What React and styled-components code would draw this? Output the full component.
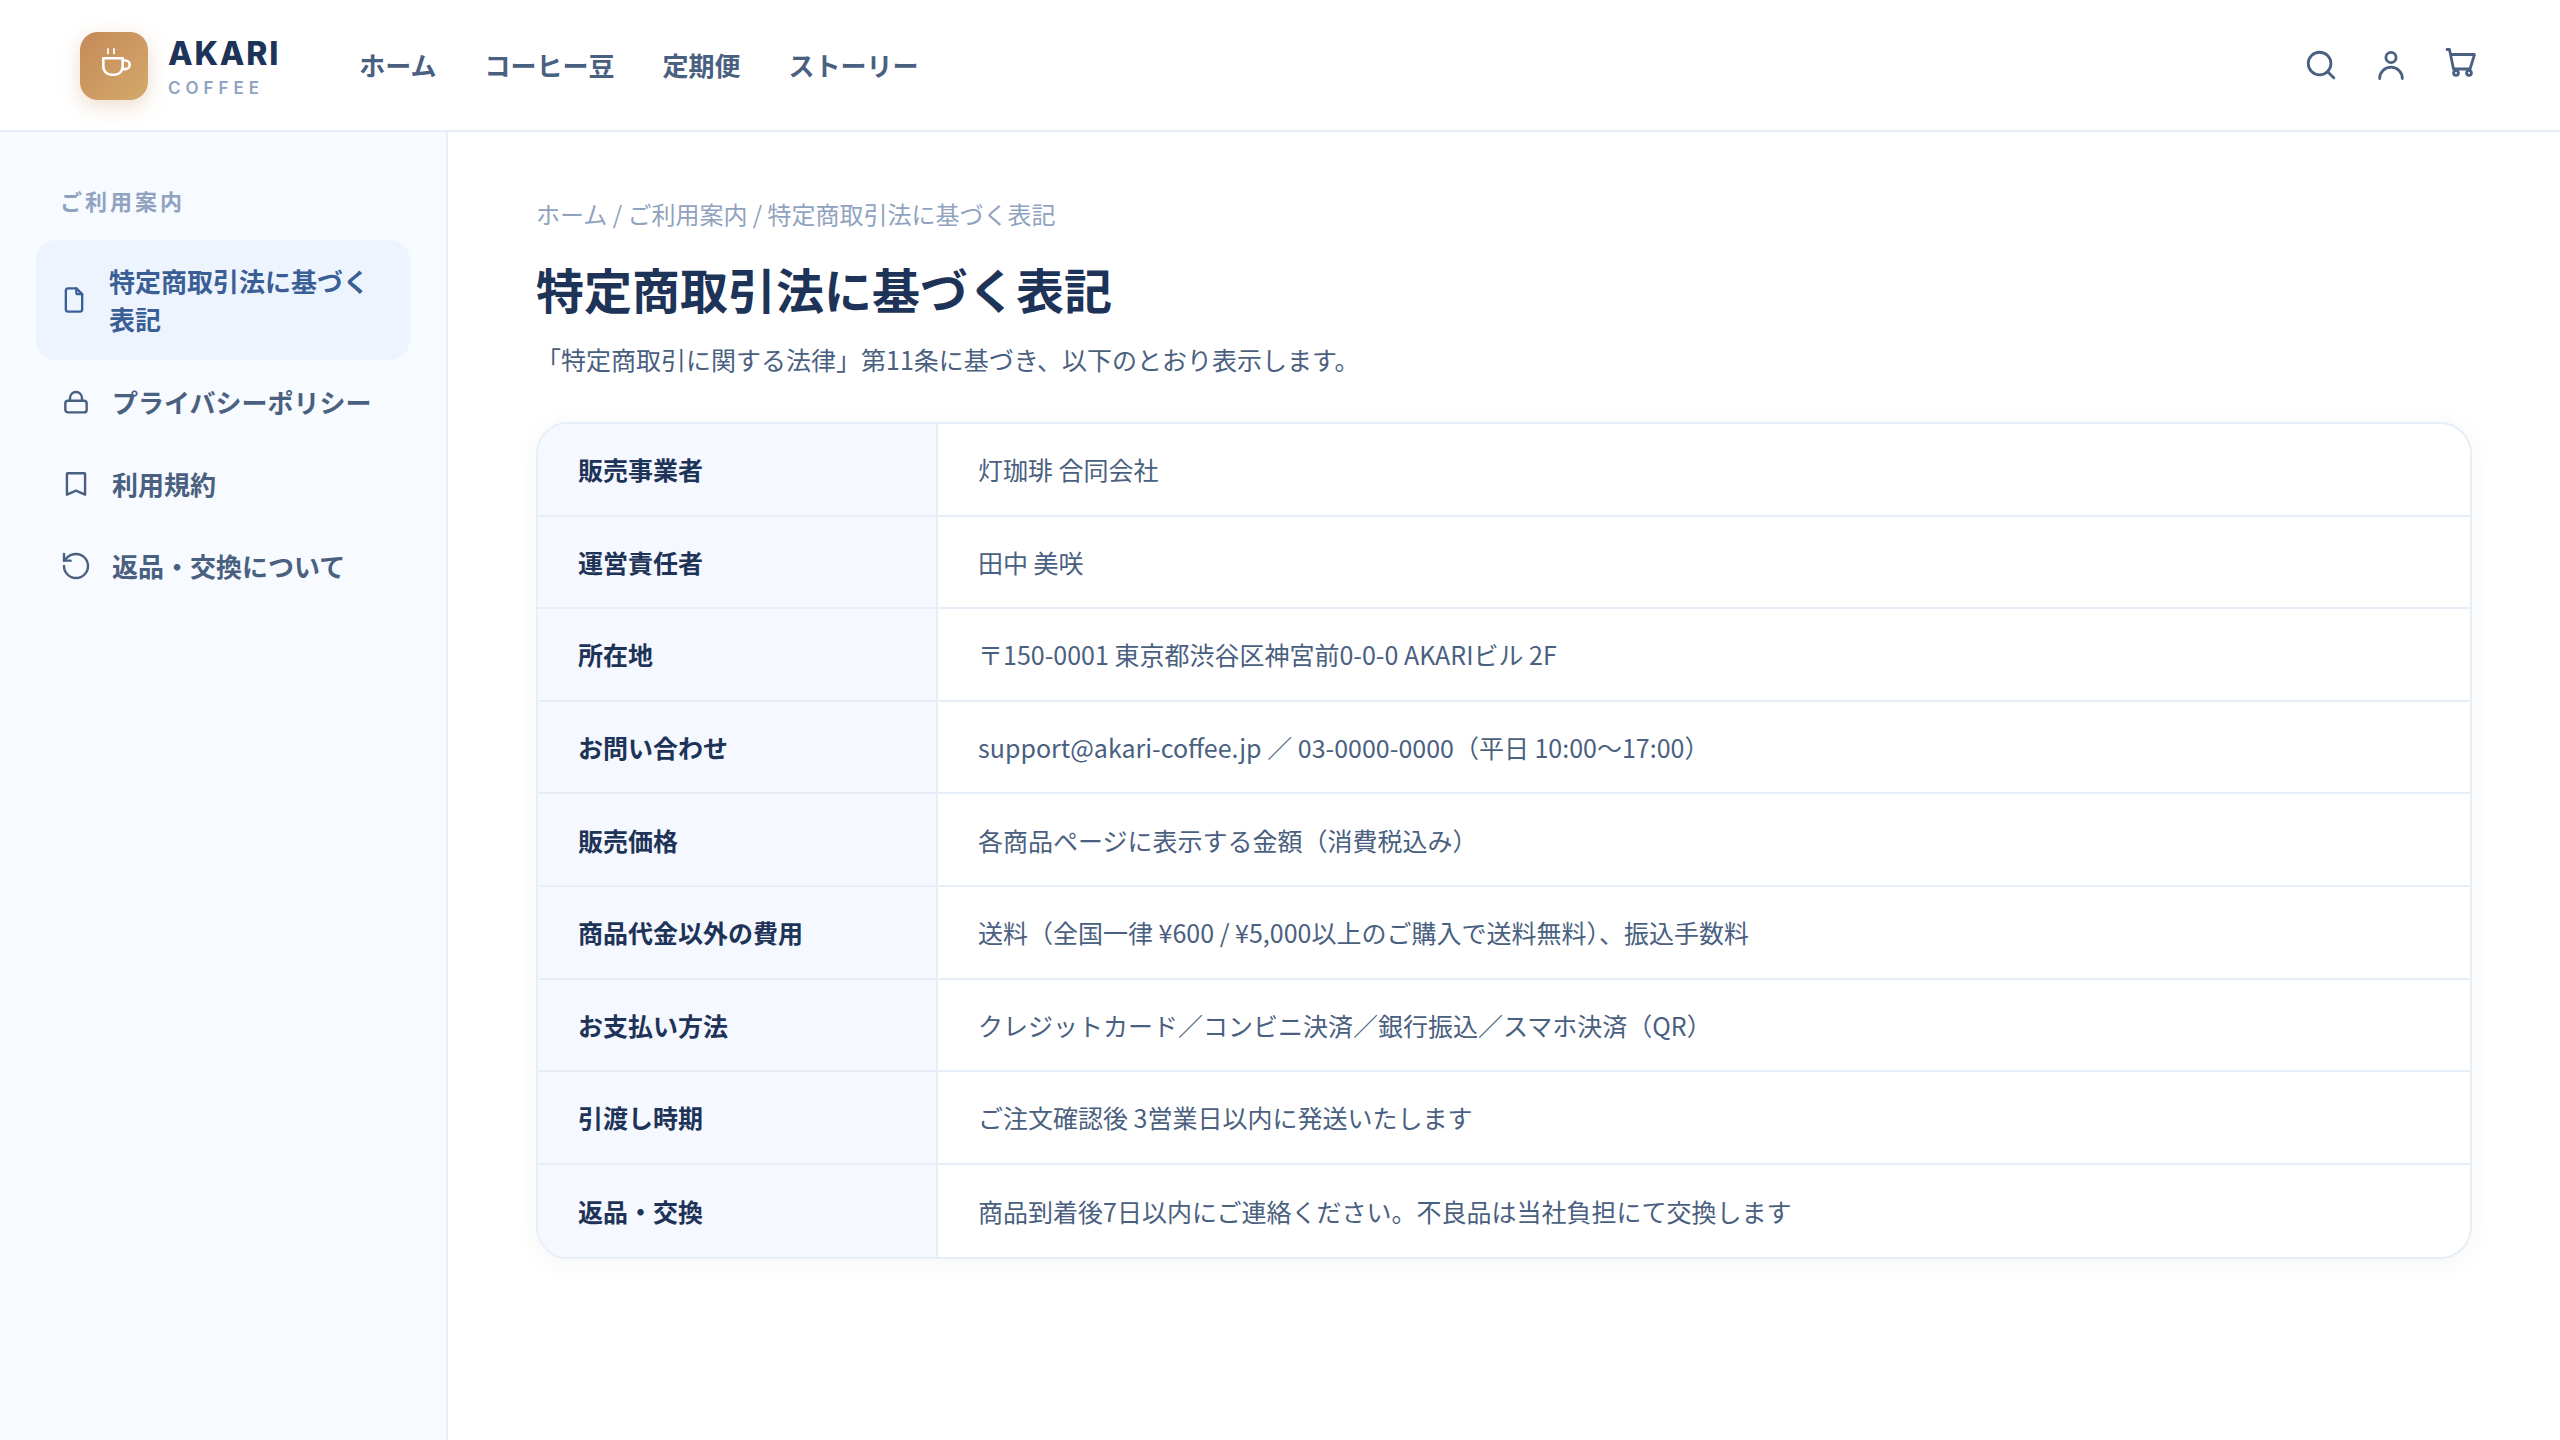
import React from 'react';
import styled, { createGlobalStyle } from 'styled-components';

const GlobalStyle = createGlobalStyle`
  html, body {
    margin: 0;
    padding: 0;
    background: #fff;
    font-family: "Noto Sans CJK JP", "Noto Sans", sans-serif;
  }
  * {
    box-sizing: border-box;
  }
`;

const Page = styled.div`
  width: 2560px;
  height: 1440px;
  display: flex;
  flex-direction: column;
  overflow: hidden;
  background: #fff;
`;

const Header = styled.header`
  height: 132px;
  flex: none;
  display: flex;
  align-items: center;
  padding: 0 82px 0 80px;
  border-bottom: 2px solid #e8eef8;
`;

const Brand = styled.div`
  display: flex;
  align-items: center;
  gap: 20px;
  margin-top: 2px;
`;

const LogoMark = styled.div`
  width: 68px;
  height: 68px;
  border-radius: 18px;
  display: flex;
  align-items: center;
  justify-content: center;
  background: linear-gradient(135deg, #c48a5a, #d4a96a);
  box-shadow: 0 6px 20px rgba(196, 138, 90, 0.3);
`;

const BrandText = styled.div`
  display: flex;
  flex-direction: column;
  padding-top: 3px;
  font-family: Inter, "Noto Sans", sans-serif;
`;

const BrandName = styled.div`
  font-size: 32px;
  line-height: 40px;
  height: 40px;
  font-weight: 800;
  letter-spacing: 1.8px;
  color: #1e3358;
`;

const BrandSub = styled.div`
  font-size: 17px;
  line-height: 28px;
  height: 28px;
  font-weight: 600;
  letter-spacing: 5px;
  color: #8fa3c0;
`;

const Nav = styled.nav`
  display: flex;
  gap: 48px;
  margin-left: 79px;
  margin-bottom: 2px;
`;

const NavLink = styled.a`
  font-size: 26px;
  font-weight: 700;
  color: #4a6080;
`;

const HeaderIcons = styled.div`
  margin-left: auto;
  display: flex;
  align-items: center;
  gap: 36px;
  color: #4a6080;
`;

const Body = styled.div`
  flex: 1;
  display: flex;
  min-height: 0;
`;

const Sidebar = styled.aside`
  width: 448px;
  flex: none;
  padding: 52px 36px;
  background: #f7faff;
  border-right: 2px solid #e8eef8;
`;

const SideTitle = styled.div`
  font-size: 22px;
  line-height: 32px;
  font-weight: 700;
  letter-spacing: 3px;
  color: #8fa3c0;
  padding-left: 24px;
  margin-bottom: 24px;
`;

const SideList = styled.div`
  display: flex;
  flex-direction: column;
  gap: 2px;
`;

const SideItem = styled.a`
  display: flex;
  align-items: center;
  gap: ${p => (p.$active ? '21px' : '20px')};
  padding: ${p => (p.$active ? '22px 24px' : '21px 24px')};
  border-radius: 20px;
  font-size: 26px;
  line-height: 38px;
  font-weight: 700;
  color: ${p => (p.$active ? '#3a5f96' : '#4a6080')};
  background: ${p => (p.$active ? '#eef4fd' : 'transparent')};
  svg {
    flex: none;
  }
`;

const Main = styled.main`
  flex: 1;
  padding: 64px 88px 0 88px;
`;

const Breadcrumb = styled.div`
  font-size: 24px;
  line-height: 36px;
  color: #8fa3c0;
  margin-bottom: 22px;
`;

const Title = styled.h1`
  margin: 0 0 17px;
  font-size: 48px;
  line-height: 68px;
  font-weight: 700;
  color: #1e3358;
`;

const Lead = styled.p`
  margin: 0 0 43px;
  font-size: 25px;
  line-height: 40px;
  color: #4a6080;
`;

const Card = styled.div`
  border: 2px solid #e8eef8;
  border-radius: 32px;
  overflow: hidden;
  background: #fff;
  box-shadow: 0 4px 24px rgba(30, 51, 88, 0.05);
`;

const Row = styled.div`
  display: flex;
  height: 92.6px;
  border-bottom: ${p => (p.$last ? 'none' : '2px solid #e8eef8')};
`;

const Label = styled.div`
  width: 400px;
  flex: none;
  display: flex;
  align-items: center;
  padding-left: 40px;
  font-size: 25px;
  font-weight: 700;
  color: #1e3358;
  background: #f5f8fe;
  border-right: 2px solid #e8eef8;
`;

const Value = styled.div`
  flex: 1;
  display: flex;
  align-items: center;
  padding-left: 40px;
  font-size: 25px;
  color: #4a6080;
`;

const rows = [
  ['販売事業者', '灯珈琲 合同会社'],
  ['運営責任者', '田中 美咲'],
  ['所在地', '〒150-0001 東京都渋谷区神宮前0-0-0 AKARIビル 2F'],
  ['お問い合わせ', 'support@akari-coffee.jp ／ 03-0000-0000（平日 10:00〜17:00）'],
  ['販売価格', '各商品ページに表示する金額（消費税込み）'],
  ['商品代金以外の費用', '送料（全国一律 ¥600 / ¥5,000以上のご購入で送料無料）、振込手数料'],
  ['お支払い方法', 'クレジットカード／コンビニ決済／銀行振込／スマホ決済（QR）'],
  ['引渡し時期', 'ご注文確認後 3営業日以内に発送いたします'],
  ['返品・交換', '商品到着後7日以内にご連絡ください。不良品は当社負担にて交換します'],
];

const Icon = ({ size = 32, children, box = 24, width = 1.8 }) => (
  <svg width={size} height={size} viewBox={`0 0 ${box} ${box}`} fill="none" stroke="currentColor" strokeWidth={width} strokeLinecap="round" strokeLinejoin="round">
    {children}
  </svg>
);

const CupIcon = () => (
  <svg width="40" height="40" viewBox="0 0 40 40" fill="none" stroke="#fff" strokeWidth="2.6" strokeLinecap="round" strokeLinejoin="round">
    <path d="M9.3 12.3h19.4v8.4a8 8 0 0 1-8 8h-3.4a8 8 0 0 1-8-8z" />
    <path d="M28.7 14.5h2.7a4.3 4.3 0 0 1 0 8.6h-2.7" />
    <path d="M14 3c-.8 1.2.8 2.6 0 4.4M20 3c-.8 1.2.8 2.6 0 4.4" strokeWidth="1.8" />
  </svg>
);

const App = () => (
  <Page>
    <GlobalStyle />
    <Header>
      <Brand>
        <LogoMark><CupIcon /></LogoMark>
        <BrandText>
          <BrandName>AKARI</BrandName>
          <BrandSub>COFFEE</BrandSub>
        </BrandText>
      </Brand>
      <Nav>
        <NavLink>ホーム</NavLink>
        <NavLink>コーヒー豆</NavLink>
        <NavLink>定期便</NavLink>
        <NavLink>ストーリー</NavLink>
      </Nav>
      <HeaderIcons>
        <Icon size={34} width={2}><circle cx="11" cy="11" r="8" /><path d="M21 21l-4.3-4.3" /></Icon>
        <Icon size={34} width={2}><circle cx="12" cy="6.7" r="3.6" /><path d="M4 21.5a8 8 0 0 1 16 0" /></Icon>
        <Icon size={34} box={34} width={2.8}>
          <path d="M3 1.5h2.5l4 19.5h16.5l4.5-14.5H6.500" />
          <circle cx="12" cy="25" r="2.4" />
          <circle cx="25" cy="25" r="2.4" />
        </Icon>
      </HeaderIcons>
    </Header>
    <Body>
      <Sidebar>
        <SideTitle>ご利用案内</SideTitle>
        <SideList>
          <SideItem $active>
            <Icon size={28} width={2}><path d="M14 2H7a2 2 0 0 0-2 2v16a2 2 0 0 0 2 2h10a2 2 0 0 0 2-2V7z" /><path d="M14 2v3.5a1.5 1.5 0 0 0 1.5 1.5H19" /></Icon>
            <span>特定商取引法に基づく表記</span>
          </SideItem>
          <SideItem>
            <Icon><rect x="4" y="11.1" width="16" height="8.7" rx="2" /><path d="M7.5 11V9a4.500 4.500 0 0 1 9 0v2" /></Icon>
            <span>プライバシーポリシー</span>
          </SideItem>
          <SideItem>
            <Icon><path d="M5.2 4.400a.5.5 0 0 1 .5-.5h12.600a.5.5 0 0 1 .5.500V20L12 17 5.200 20z" /></Icon>
            <span>利用規約</span>
          </SideItem>
          <SideItem>
            <Icon><path d="M3 12a9 9 0 1 0 9-9 9.750 9.750 0 0 0-6.740 2.740L3 8" /><path d="M3 3v5h5" /></Icon>
            <span>返品・交換について</span>
          </SideItem>
        </SideList>
      </Sidebar>
      <Main>
        <Breadcrumb>ホーム / ご利用案内 / 特定商取引法に基づく表記</Breadcrumb>
        <Title>特定商取引法に基づく表記</Title>
        <Lead>「特定商取引に関する法律」第11条に基づき、以下のとおり表示します。</Lead>
        <Card>
          {rows.map(([k, v], i) => (
            <Row key={k} $last={i === rows.length - 1}>
              <Label>{k}</Label>
              <Value>{v}</Value>
            </Row>
          ))}
        </Card>
      </Main>
    </Body>
  </Page>
);

export default App;
